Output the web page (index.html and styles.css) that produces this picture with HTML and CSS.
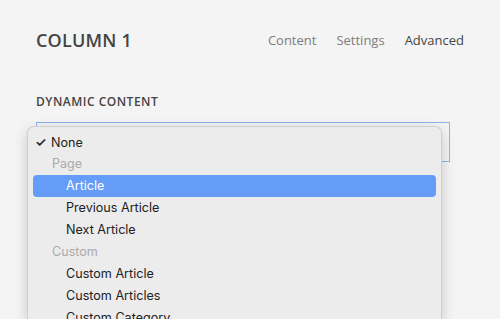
FILE: index.html
```html
<!DOCTYPE html>
<html lang="en">
<head>
    <meta charset="UTF-8">
    <title>Column 1</title>
    <link rel="stylesheet" href="styles.css">
</head>
<body>
    <div class="panel">
        <div class="header">
            <div class="title">COLUMN 1</div>
            <div class="tabs">
                <span class="tab">Content</span>
                <span class="tab">Settings</span>
                <span class="tab active">Advanced</span>
            </div>
        </div>

        <div class="field">
            <div class="label">DYNAMIC CONTENT</div>
            <div class="select-wrap">
                <div class="select"></div>
                <ul class="menu">
                    <li class="item checked"><span class="check">&#10003;</span>None</li>
                    <li class="group">Page</li>
                    <li class="item sub selected">Article</li>
                    <li class="item sub">Previous Article</li>
                    <li class="item sub">Next Article</li>
                    <li class="group">Custom</li>
                    <li class="item sub">Custom Article</li>
                    <li class="item sub">Custom Articles</li>
                    <li class="item sub">Custom Category</li>
                </ul>
            </div>
        </div>
    </div>
</body>
</html>
```

FILE: styles.css
```css
body {
    margin: 0;
    background-color: #f4f4f4;
    font-family: 'Open Sans', sans-serif;
    overflow: hidden;
}

.panel {
    height: 319px;
    box-sizing: border-box;
    padding: 28px 36px 0 36px;
    overflow: hidden;
}

.header {
    display: flex;
    justify-content: space-between;
    align-items: center;
}

.title {
    font-weight: 600;
    font-size: 18px;
    letter-spacing: 0.2px;
    color: #444;
}

.tabs {
    display: flex;
    gap: 20px;
    font-size: 13px;
    color: #7d7d7d;
}

.tab.active {
    color: #444;
}

.field {
    margin-top: 41px;
}

.label {
    font-size: 12px;
    font-weight: 600;
    color: #444;
    letter-spacing: 0.5px;
}

.select-wrap {
    position: relative;
    margin-top: 12px;
    width: 414px;
}

.select {
    height: 38px;
    border: 1px solid #8fb2ec;
    background: #f4f4f4;
}

.menu {
    position: absolute;
    top: 4px;
    left: -9px;
    width: 403px;
    height: 189px;
    margin: 0;
    padding: 4px 5px 0 5px;
    list-style: none;
    background: #ececec;
    border: 1px solid #cfcfcf;
    border-bottom: none;
    border-radius: 7px 7px 0 0;
    box-shadow: 0 4px 14px rgba(0, 0, 0, 0.18);
    overflow: hidden;
    font-family: 'Inter', 'Roboto', sans-serif;
    font-size: 12.6px;
    color: #222;
}

.menu li {
    height: 22px;
    line-height: 22px;
    padding-left: 19px;
    border-radius: 4px;
}

.menu .checked {
    padding-left: 2px;
}

.check {
    display: inline-block;
    width: 16px;
    font-size: 13px;
    font-weight: 600;
}

.menu .group {
    color: #aaa;
}

.menu .sub {
    padding-left: 33px;
}

.menu .selected {
    background: #649cf7;
    color: #fff;
}
```
